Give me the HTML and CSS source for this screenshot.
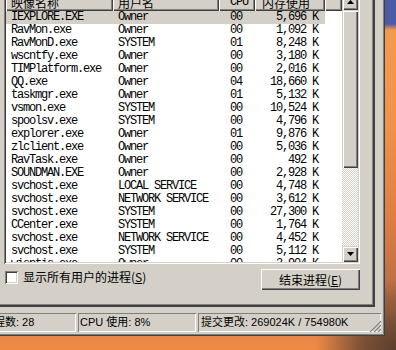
FILE: index.html
```html
<!DOCTYPE html>
<html lang="zh-CN">
<head>
  <meta charset="UTF-8" />
  <title>Windows 任务管理器</title>
  <link rel="stylesheet" href="styles.css">
</head>
<body>
  <div class="window">
    <div class="tabpage">
      <div class="listview">
        <div class="lv-main">
          <div class="lv-header">
            <div class="hd cjk">映像名称</div>
            <div class="hd cjk">用户名</div>
            <div class="hd cpu">CPU</div>
            <div class="hd cjk mem-hd">内存使用</div>
            <div class="hd filler"></div>
          </div>
          <div class="lv-rows">
            <div class="lv-row selected"><span>IEXPLORE.EXE</span><span>Owner</span><span class="cpu">00</span><span class="mem">5,696 K</span></div>
            <div class="lv-row"><span>RavMon.exe</span><span>Owner</span><span class="cpu">00</span><span class="mem">1,092 K</span></div>
            <div class="lv-row"><span>RavMonD.exe</span><span>SYSTEM</span><span class="cpu">01</span><span class="mem">8,248 K</span></div>
            <div class="lv-row"><span>wscntfy.exe</span><span>Owner</span><span class="cpu">00</span><span class="mem">3,180 K</span></div>
            <div class="lv-row"><span>TIMPlatform.exe</span><span>Owner</span><span class="cpu">00</span><span class="mem">2,016 K</span></div>
            <div class="lv-row"><span>QQ.exe</span><span>Owner</span><span class="cpu">04</span><span class="mem">18,660 K</span></div>
            <div class="lv-row"><span>taskmgr.exe</span><span>Owner</span><span class="cpu">01</span><span class="mem">5,132 K</span></div>
            <div class="lv-row"><span>vsmon.exe</span><span>SYSTEM</span><span class="cpu">00</span><span class="mem">10,524 K</span></div>
            <div class="lv-row"><span>spoolsv.exe</span><span>SYSTEM</span><span class="cpu">00</span><span class="mem">4,796 K</span></div>
            <div class="lv-row"><span>explorer.exe</span><span>Owner</span><span class="cpu">01</span><span class="mem">9,876 K</span></div>
            <div class="lv-row"><span>zlclient.exe</span><span>Owner</span><span class="cpu">00</span><span class="mem">5,036 K</span></div>
            <div class="lv-row"><span>RavTask.exe</span><span>Owner</span><span class="cpu">00</span><span class="mem">492 K</span></div>
            <div class="lv-row"><span>SOUNDMAN.EXE</span><span>Owner</span><span class="cpu">00</span><span class="mem">2,928 K</span></div>
            <div class="lv-row"><span>svchost.exe</span><span>LOCAL SERVICE</span><span class="cpu">00</span><span class="mem">4,748 K</span></div>
            <div class="lv-row"><span>svchost.exe</span><span>NETWORK SERVICE</span><span class="cpu">00</span><span class="mem">3,612 K</span></div>
            <div class="lv-row"><span>svchost.exe</span><span>SYSTEM</span><span class="cpu">00</span><span class="mem">27,300 K</span></div>
            <div class="lv-row"><span>CCenter.exe</span><span>SYSTEM</span><span class="cpu">00</span><span class="mem">1,764 K</span></div>
            <div class="lv-row"><span>svchost.exe</span><span>NETWORK SERVICE</span><span class="cpu">00</span><span class="mem">4,452 K</span></div>
            <div class="lv-row"><span>svchost.exe</span><span>SYSTEM</span><span class="cpu">00</span><span class="mem">5,112 K</span></div>
            <div class="lv-row"><span>wisptis.exe</span><span>Owner</span><span class="cpu">00</span><span class="mem">3,904 K</span></div>
          </div>
        </div>
        <div class="scrollbar">
          <div class="sb-btn">
            <svg width="7" height="4" viewBox="0 0 7 4"><path d="M3.5 0 7 4H0z" fill="#000"/></svg>
          </div>
          <div class="sb-thumb"></div>
          <div class="sb-track"></div>
          <div class="sb-btn">
            <svg width="7" height="4" viewBox="0 0 7 4"><path d="M0 0h7L3.5 4z" fill="#000"/></svg>
          </div>
        </div>
      </div>

      <div class="actions">
        <label class="check">
          <span class="box"></span>
          <span class="cjk">显示所有用户的进程(<u>S</u>)</span>
        </label>
        <button class="btn cjk">结束进程(<u>E</u>)</button>
      </div>
    </div>

    <div class="statusbar">
      <div class="panel p1">进程数: 28</div>
      <div class="panel p2">CPU 使用: 8%</div>
      <div class="panel p3">
        <span>提交更改: 269024K / 754980K</span>
        <svg class="grip" width="12" height="12" viewBox="0 0 12 12">
          <path d="M11 1 1 11M11 5 5 11M11 9 9 11" stroke="#fff" stroke-width="1"/>
          <path d="M12 1 1 12M12 5 5 12M12 9 9 12" stroke="#808080" stroke-width="1.4"/>
        </svg>
      </div>
    </div>
  </div>
</body>
</html>
```

FILE: styles.css
```css
html, body {
  margin: 0;
  width: 396px;
  height: 350px;
  overflow: hidden;
}
body {
  background:
    radial-gradient(ellipse 80px 70px at 396px 350px, #5a3d2d 0%, #7d5238 45%, rgba(150, 95, 60, 0) 100%),
    linear-gradient(to bottom, #4b5ba6 0, #4b5ba6 24px, #f49a4c 30px, #f2924a 120px, #de7d43 220px, #b56d46 300px, #e8884a 338px, #f08a40 350px);
  font-family: "Liberation Mono", "Noto Sans CJK SC", monospace;
}
.cjk {
  font-family: "Noto Sans CJK SC", "Liberation Sans", sans-serif;
}

/* window frame */
.window {
  box-sizing: border-box;
  width: 385px;
  height: 344px;
  margin-top: -8px;
  background: #d4d0c8;
  border-right: 1px solid #404040;
  border-bottom: 1px solid #404040;
  box-shadow: inset -1px -1px 0 #808080;
  display: flex;
  flex-direction: column;
}

.tabpage {
  box-sizing: border-box;
  width: 375px;
  padding: 0 13px 15px 4px;
  border-right: 2px solid;
  border-bottom: 2px solid;
  border-color: #404040;
  box-shadow: inset -1px -1px 0 #808080;
}

/* list view */
.listview {
  display: flex;
  height: 272px;
  box-sizing: border-box;
  padding: 2px;
  background: #fff;
  box-shadow: inset 1px 1px 0 #808080, inset -1px -1px 0 #fff, inset 2px 2px 0 #404040, inset -2px -2px 0 #d4d0c8;
}
.lv-main {
  flex: 1;
  overflow: hidden;
}
.lv-header {
  display: grid;
  grid-template-columns: 107px 106px 36px 70px 1fr;
  height: 17px;
}
.hd {
  box-sizing: border-box;
  height: 17px;
  line-height: 17px;
  padding-left: 5px;
  font-size: 12px;
  background: #d4d0c8;
  white-space: nowrap;
  overflow: hidden;
  box-shadow: inset 1px 1px 0 #fff, inset -1px -1px 0 #404040, inset -2px -2px 0 #808080;
}
.hd.cpu {
  padding-left: 11px;
  letter-spacing: -1.2px;
}
.hd.mem-hd {
  padding-left: 7px;
}

.lv-rows {
  height: 251px;
  overflow: hidden;
}
.lv-row {
  display: grid;
  grid-template-columns: 107px 106px 36px 70px;
  width: 319px;
  height: 13px;
  line-height: 13px;
  font-size: 12px;
  letter-spacing: -1.2px;
  color: #000;
}
.lv-row span {
  padding-left: 5px;
  white-space: nowrap;
  overflow: hidden;
}
.lv-row .cpu {
  padding-left: 11px;
}
.lv-row .mem {
  padding: 0 7px 0 0;
  text-align: right;
}
.lv-row.selected {
  background: #d4d0c8;
}

/* scrollbar */
.scrollbar {
  width: 16px;
  display: flex;
  flex-direction: column;
}
.sb-btn, .sb-thumb {
  background: #d4d0c8;
  box-shadow: inset 1px 1px 0 #d4d0c8, inset 2px 2px 0 #fff, inset -1px -1px 0 #404040, inset -2px -2px 0 #808080;
}
.sb-btn {
  height: 16px;
  display: flex;
  align-items: center;
  justify-content: center;
}
.sb-thumb {
  height: 158px;
}
.sb-track {
  flex: 1;
  background: repeating-conic-gradient(#d4d0c8 0 25%, #fff 0 50%) 0 0 / 2px 2px;
}

/* checkbox + button row */
.actions {
  display: flex;
  justify-content: space-between;
  align-items: flex-start;
  margin-top: 5px;
}
.check {
  display: flex;
  align-items: center;
  gap: 5px;
  margin-top: 1px;
  margin-left: 1px;
  font-size: 12px;
  line-height: 14px;
}
.box {
  width: 13px;
  height: 13px;
  box-sizing: border-box;
  background: #fff;
  box-shadow: inset 1px 1px 0 #808080, inset -1px -1px 0 #fff, inset 2px 2px 0 #404040, inset -2px -2px 0 #d4d0c8;
}
.btn {
  width: 99px;
  height: 21px;
  margin: 0;
  padding: 0;
  border: 0;
  font-size: 12px;
  color: #000;
  background: #d4d0c8;
  box-shadow: inset 1px 1px 0 #fff, inset -1px -1px 0 #404040, inset -2px -2px 0 #808080;
}

/* status bar */
.statusbar {
  display: flex;
  gap: 2px;
  width: 381px;
  height: 19px;
  margin-top: 6px;
  font-family: "Liberation Sans", "Noto Sans CJK SC", sans-serif;
  font-size: 11px;
}
.panel {
  box-sizing: border-box;
  height: 19px;
  line-height: 19px;
  padding-left: 3px;
  white-space: nowrap;
  box-shadow: inset 1px 1px 0 #808080, inset -1px -1px 0 #fff;
}
.p1 {
  width: 96px;
  margin-left: -20px;
}
.p2 {
  width: 118px;
  padding-left: 2px;
}
.p3 {
  flex: 1;
  display: flex;
  justify-content: space-between;
  align-items: flex-end;
}
.p3 span {
  align-self: center;
}
.grip {
  display: block;
}
```
